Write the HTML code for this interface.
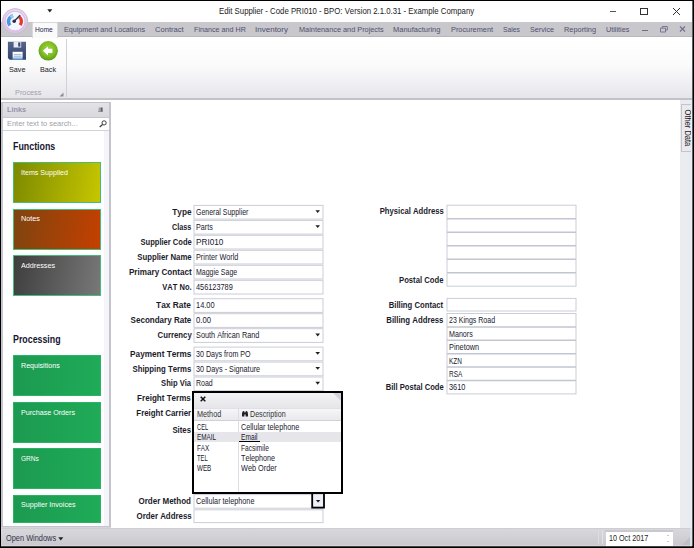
<!DOCTYPE html>
<html><head><meta charset="utf-8"><title>Edit Supplier</title>
<style>
*{box-sizing:border-box;margin:0;padding:0}
html,body{width:694px;height:548px;overflow:hidden;background:#000}
body{font-kerning:none;font-family:"Liberation Sans",sans-serif;font-size:8px;color:#222;position:relative}
.abs,.tx,.tile{position:absolute}
.tx{white-space:nowrap;height:12px;line-height:12px;transform-origin:0 50%}
.tx.r{transform-origin:100% 50%}
.title{font-size:8.6px;color:#1a1a1a;transform:scaleX(.907)}
.tab{font-size:8px;color:#50506e;transform:scaleX(.915)}
.lbl{font-size:8.4px;font-weight:bold;color:#1c1c2c;transform:scaleX(.975)}
.val{font-size:8.2px;color:#20202f;transform:scaleX(.872)}
.tile{left:13px;width:88px;height:41px;border:1px solid #3fbf7a}
.tl{font-size:8px;color:#fff;transform:scaleX(.9)}
.hd{font-size:10px;font-weight:bold;color:#15152e;transform:scaleX(.895)}
.arrow{position:absolute;width:0;height:0;border-left:2.4px solid transparent;border-right:2.4px solid transparent;border-top:2.8px solid #222}
</style></head><body>

<div class="abs" style="left:1px;top:1px;width:691px;height:545px;background:#fff"></div>
<div class="abs" style="left:1px;top:546px;width:691px;height:1px;background:#444446"></div>
<div class="abs" style="left:692px;top:1px;width:1px;height:545px;background:#5c6068"></div>
<div class="tx title" style="left:218.5px;top:5px;transform:scaleX(0.907);">Edit Supplier - Code PRI010 - BPO: Version 2.1.0.31 - Example Company</div>
<div class="abs" style="left:609.5px;top:11px;width:6px;height:1px;background:#555"></div>
<div class="abs" style="left:640px;top:8px;width:8px;height:7px;border:1px solid #333"></div>
<svg class="abs" style="left:672px;top:7px" width="9" height="9" viewBox="0 0 9 9"><path d="M1 1L8 8M8 1L1 8" stroke="#333" stroke-width="1" fill="none"/></svg>
<svg class="abs" style="left:47px;top:8.6px" width="6" height="4" viewBox="0 0 6 4"><path d="M0.3 0.2H5.3L2.8 3.6Z" fill="#222"/></svg>
<div class="abs" style="left:1px;top:22px;width:691px;height:15px;background:#c7c7cc;border-bottom:1px solid #b6b6be"></div>
<div class="abs" style="left:1px;top:37px;width:691px;height:63px;background:linear-gradient(#ffffff,#fbfbfc 45%,#ececf0 85%,#e6e6ea);border-bottom:2px solid #c2c2c7"></div>
<div class="abs" style="left:32px;top:22px;width:26px;height:16px;background:#fafafb;border:1px solid #d8d8de;border-bottom:none;border-radius:2px 2px 0 0"></div>
<div class="tx tab" style="left:34.8px;top:24px;transform:scaleX(0.834);color:#26264a">Home</div>
<div class="tx tab" style="left:63.6px;top:24px;transform:scaleX(0.897);">Equipment and Locations</div>
<div class="tx tab" style="left:155.3px;top:24px;transform:scaleX(0.949);">Contract</div>
<div class="tx tab" style="left:193.8px;top:24px;transform:scaleX(0.899);">Finance and HR</div>
<div class="tx tab" style="left:255.4px;top:24px;transform:scaleX(1.003);">Inventory</div>
<div class="tx tab" style="left:298.6px;top:24px;transform:scaleX(0.916);">Maintenance and Projects</div>
<div class="tx tab" style="left:393.1px;top:24px;transform:scaleX(0.935);">Manufacturing</div>
<div class="tx tab" style="left:450.5px;top:24px;transform:scaleX(0.917);">Procurement</div>
<div class="tx tab" style="left:502.8px;top:24px;transform:scaleX(0.849);">Sales</div>
<div class="tx tab" style="left:529.7px;top:24px;transform:scaleX(0.900);">Service</div>
<div class="tx tab" style="left:564.0px;top:24px;transform:scaleX(0.922);">Reporting</div>
<div class="tx tab" style="left:606.0px;top:24px;transform:scaleX(0.904);">Utilities</div>
<div class="abs" style="left:641.5px;top:29.5px;width:6px;height:1px;background:#70708a"></div>
<svg class="abs" style="left:659.6px;top:25.6px" width="8" height="7" viewBox="0 0 8 7"><path d="M2.3 2V0.5H7.3V4H5.6M0.5 2.2H5.5V6H0.5Z" stroke="#70708a" stroke-width="0.9" fill="none"/></svg>
<svg class="abs" style="left:679px;top:26px" width="7" height="6" viewBox="0 0 7 6"><path d="M1 0.5L6 5.5M6 0.5L1 5.5" stroke="#70708a" stroke-width="1.1" fill="none"/></svg>
<svg class="abs" style="left:1px;top:6.5px" width="29" height="29" viewBox="0 0 29 29">
<defs><radialGradient id="ag" cx="50%" cy="45%" r="55%"><stop offset="0" stop-color="#ffffff"/><stop offset=".6" stop-color="#edf4fb"/><stop offset=".78" stop-color="#ead0f0"/><stop offset="1" stop-color="#c9c0d2"/></radialGradient></defs>
<circle cx="14.1" cy="14.2" r="12.6" fill="url(#ag)" stroke="#c8c0d0" stroke-width="1"/>
<circle cx="14.1" cy="14.2" r="10.1" fill="none" stroke="#e0bae8" stroke-width="1.2"/>
<circle cx="14.1" cy="14.2" r="8.8" fill="#f2f8fd"/>
<path d="M7.6 19.4A7.7 7.7 0 0 1 11.4 7L12.6 10.2A4.3 4.3 0 0 0 10.4 17.2Z" fill="#4f97dc"/>
<path d="M8.6 9.6A7.6 7.6 0 0 1 11.4 7L12.6 10.2A4.3 4.3 0 0 0 11.2 11.4Z" fill="#9ccaf0"/>
<path d="M19 8.4A7.7 7.7 0 0 1 20.6 19L17.8 17.2A4.4 4.4 0 0 0 17.2 11Z" fill="#e23a28"/>
<path d="M13.4 14L18.8 8.6" stroke="#2a3248" stroke-width="1.4" fill="none" stroke-linecap="round"/>
<circle cx="13.2" cy="14.2" r="1.8" fill="#26304c"/>
</svg>
<div class="abs" style="left:65.5px;top:39px;width:1px;height:58px;background:#d0d0d6"></div>
<svg class="abs" style="left:7px;top:41px" width="20" height="20" viewBox="0 0 20 20">
<defs><linearGradient id="sg" x1="0" y1="0" x2="0" y2="1"><stop offset="0" stop-color="#56658c"/><stop offset="1" stop-color="#34446c"/></linearGradient>
<linearGradient id="sl" x1="0" y1="0" x2="0" y2="1"><stop offset="0" stop-color="#ffffff"/><stop offset=".6" stop-color="#e4eef8"/><stop offset="1" stop-color="#4a98de"/></linearGradient></defs>
<path d="M0.9 0.7H19V18.7H2.6L0.9 17Z" fill="url(#sg)"/>
<rect x="6.6" y="0.7" width="7.6" height="5.8" fill="#e8ecf4"/>
<rect x="11.2" y="1.4" width="2.2" height="4.2" fill="#3c4b72"/>
<rect x="5.6" y="10.8" width="10" height="7.9" fill="url(#sl)"/>
<rect x="7" y="13" width="7.2" height="0.9" fill="#a8b4c8"/>
<rect x="7" y="14.8" width="7.2" height="0.9" fill="#a8b4c8"/>
</svg>
<svg class="abs" style="left:38px;top:40px" width="21" height="22" viewBox="0 0 21 22">
<defs><radialGradient id="bg" cx="50%" cy="42%" r="58%"><stop offset="0" stop-color="#a6d444"/><stop offset=".65" stop-color="#7cbc22"/><stop offset="1" stop-color="#5a9812"/></radialGradient></defs>
<circle cx="10.2" cy="10.8" r="9.7" fill="url(#bg)"/>
<path d="M4.8 10.8L10 6.2V8.8H14.4V13.1H10V15.4Z" fill="#fff"/>
</svg>
<div class="tx tab" style="left:8.8px;top:64px;color:#222;font-size:8.1px;transform:scaleX(.89)">Save</div>
<div class="tx tab" style="left:40.2px;top:64px;color:#222;font-size:8.1px;transform:scaleX(.89)">Back</div>
<div class="tx tab" style="left:15.0px;top:87px;color:#a0a0aa">Process</div>
<svg class="abs" style="left:59px;top:92px" width="5" height="5" viewBox="0 0 5 5"><path d="M4.5 0.5V4.5H0.5Z" fill="#8a8a98"/></svg>
<div class="abs" style="left:1px;top:102px;width:110px;height:425px;background:#fff;border:1px solid #c2c3cc;border-left:2px solid #c4c5ce;border-right:2px solid #c3c4cd"></div>
<div class="abs" style="left:3px;top:103px;width:106px;height:15px;background:linear-gradient(#e3e3e7,#d8d8dd);border-bottom:1px solid #c6c6ce"></div>
<div class="tx tab" style="left:6.6px;top:104px;color:#9494a8;font-weight:bold;font-size:8px">Links</div>
<svg class="abs" style="left:98px;top:107px" width="6" height="6" viewBox="0 0 6 6"><rect x="0.5" y="0.5" width="2.2" height="4.2" fill="#a4a4aa"/><rect x="2.7" y="0.5" width="1.9" height="4.2" fill="#5c5c62"/><rect x="0.2" y="4.2" width="4.8" height="0.8" fill="#8a8a90"/></svg>
<div class="abs" style="left:3px;top:118px;width:106px;height:13px;background:#fff;border-bottom:1px solid #d2d4dc"></div>
<div class="tx tab" style="left:6.6px;top:118px;color:#a0a0ac;transform:scaleX(.93)">Enter text to search...</div>
<svg class="abs" style="left:98px;top:119px" width="10" height="10" viewBox="98 119 10 10"><circle cx="104.1" cy="122.9" r="2.1" stroke="#3c3c42" stroke-width="1" fill="none"/><path d="M102.6 124.5L99.7 127" stroke="#3c3c42" stroke-width="1.3"/></svg>
<div class="abs" style="left:103.5px;top:131px;width:5.5px;height:395px;background:#f5f5f9"></div>
<div class="tx hd" style="left:13.2px;top:140px;height:14px;line-height:14px;transform:scaleX(0.885);">Functions</div>
<div class="tile" style="top:162px;background:linear-gradient(100deg,#7d8a00,#c6c600)"></div>
<div class="tx tl" style="left:21.4px;top:167px;transform:scaleX(0.888);">Items Supplied</div>
<div class="tile" style="top:208.5px;background:linear-gradient(100deg,#7e4410,#c44000)"></div>
<div class="tx tl" style="left:21.4px;top:213px;transform:scaleX(0.909);">Notes</div>
<div class="tile" style="top:255px;background:linear-gradient(100deg,#3e3e3e,#787878)"></div>
<div class="tx tl" style="left:21.4px;top:260px;transform:scaleX(0.900);">Addresses</div>
<div class="tx hd" style="left:13.4px;top:333px;height:14px;line-height:14px;transform:scaleX(0.883);">Processing</div>
<div class="tile" style="top:355.4px;height:41px;background:linear-gradient(90deg,#1c9a50,#1fab58);border-color:#27b565"></div>
<div class="tx tl" style="left:21.4px;top:360px;transform:scaleX(0.888);">Requisitions</div>
<div class="tile" style="top:402px;height:41px;background:linear-gradient(90deg,#1c9a50,#1fab58);border-color:#27b565"></div>
<div class="tx tl" style="left:21.4px;top:407px;transform:scaleX(0.893);">Purchase Orders</div>
<div class="tile" style="top:448.3px;height:41px;background:linear-gradient(90deg,#1c9a50,#1fab58);border-color:#27b565"></div>
<div class="tx tl" style="left:21.4px;top:453px;transform:scaleX(0.822);">GRNs</div>
<div class="tile" style="top:494.8px;height:28px;background:linear-gradient(90deg,#1c9a50,#1fab58);border-color:#27b565"></div>
<div class="tx tl" style="left:21.4px;top:499px;transform:scaleX(0.895);">Supplier Invoices</div>
<div class="abs" style="left:679.5px;top:100px;width:12.5px;height:428px;background:#ebecf0"></div>
<div class="abs" style="left:680.5px;top:104px;width:11px;height:47.5px;border:1px solid #c4c4ce;background:#e9e9ee"></div>
<div class="abs" style="left:686.9px;top:127.0px;width:0;height:0"><div style="position:absolute;left:-19px;top:-6px;width:38px;height:12px;line-height:12px;font-size:8.2px;color:#1c1c24;text-align:center;white-space:nowrap;transform:rotate(90deg) scaleX(.915)">Other Data</div></div>
<svg class="abs" style="left:0;top:0" width="694" height="548" viewBox="0 0 694 548"><rect x="194.00" y="205.40" width="129.00" height="13.70" fill="#fff" stroke="#cbcdd8" stroke-width="1"/><rect x="194.00" y="220.40" width="129.00" height="13.70" fill="#fff" stroke="#cbcdd8" stroke-width="1"/><rect x="194.00" y="235.30" width="129.00" height="13.70" fill="#fff" stroke="#cbcdd8" stroke-width="1"/><rect x="194.00" y="250.30" width="129.00" height="13.70" fill="#fff" stroke="#cbcdd8" stroke-width="1"/><rect x="194.00" y="265.30" width="129.00" height="13.70" fill="#fff" stroke="#cbcdd8" stroke-width="1"/><rect x="194.00" y="280.30" width="129.00" height="13.70" fill="#fff" stroke="#cbcdd8" stroke-width="1"/><rect x="194.00" y="298.70" width="129.00" height="13.70" fill="#fff" stroke="#cbcdd8" stroke-width="1"/><rect x="194.00" y="313.70" width="129.00" height="13.70" fill="#fff" stroke="#cbcdd8" stroke-width="1"/><rect x="194.00" y="328.70" width="129.00" height="13.70" fill="#fff" stroke="#cbcdd8" stroke-width="1"/><rect x="194.00" y="347.10" width="129.00" height="13.70" fill="#fff" stroke="#cbcdd8" stroke-width="1"/><rect x="194.00" y="362.10" width="129.00" height="13.70" fill="#fff" stroke="#cbcdd8" stroke-width="1"/><rect x="194.00" y="377.00" width="129.00" height="13.70" fill="#fff" stroke="#cbcdd8" stroke-width="1"/><rect x="194.00" y="494.60" width="129.00" height="13.60" fill="#fff" stroke="#cbcdd8" stroke-width="1"/><rect x="194.00" y="509.80" width="129.00" height="12.80" fill="#fff" stroke="#cbcdd8" stroke-width="1"/><rect x="447.00" y="205.20" width="129.00" height="81.00" fill="#fff" stroke="#cbcdd8" stroke-width="1"/><path d="M447.00 218.70H576.00" stroke="#c2c5d2" stroke-width="1.5"/><path d="M447.00 232.20H576.00" stroke="#c2c5d2" stroke-width="1.5"/><path d="M447.00 245.70H576.00" stroke="#c2c5d2" stroke-width="1.5"/><path d="M447.00 259.20H576.00" stroke="#c2c5d2" stroke-width="1.5"/><path d="M447.00 272.70H576.00" stroke="#c2c5d2" stroke-width="1.5"/><rect x="447.00" y="298.40" width="129.00" height="12.60" fill="#fff" stroke="#cbcdd8" stroke-width="1"/><rect x="447.00" y="313.50" width="129.00" height="80.40" fill="#fff" stroke="#cbcdd8" stroke-width="1"/><path d="M447.00 326.90H576.00" stroke="#c2c5d2" stroke-width="1.5"/><path d="M447.00 340.30H576.00" stroke="#c2c5d2" stroke-width="1.5"/><path d="M447.00 353.70H576.00" stroke="#c2c5d2" stroke-width="1.5"/><path d="M447.00 367.10H576.00" stroke="#c2c5d2" stroke-width="1.5"/><path d="M447.00 380.50H576.00" stroke="#c2c5d2" stroke-width="1.5"/></svg>
<div class="tx lbl r" style="right:502.7px;top:206px;transform:scaleX(0.985);">Type</div>
<div class="tx val" style="left:196.4px;top:207px;transform:scaleX(0.853);">General Supplier</div>
<div class="tx lbl r" style="right:502.7px;top:221px;transform:scaleX(0.861);">Class</div>
<div class="tx val" style="left:196.4px;top:222px;transform:scaleX(0.878);">Parts</div>
<div class="tx lbl r" style="right:502.7px;top:236px;transform:scaleX(0.903);">Supplier Code</div>
<div class="tx val" style="left:196.4px;top:237px;transform:scaleX(1.002);">PRI010</div>
<div class="tx lbl r" style="right:502.7px;top:251px;transform:scaleX(0.927);">Supplier Name</div>
<div class="tx val" style="left:196.4px;top:252px;transform:scaleX(0.887);">Printer World</div>
<div class="tx lbl r" style="right:502.7px;top:266px;transform:scaleX(0.971);">Primary Contact</div>
<div class="tx val" style="left:196.4px;top:267px;transform:scaleX(0.853);">Maggie Sage</div>
<div class="tx lbl r" style="right:502.7px;top:281px;transform:scaleX(0.898);">VAT No.</div>
<div class="tx val" style="left:196.4px;top:282px;transform:scaleX(0.897);">456123789</div>
<div class="tx lbl r" style="right:502.7px;top:299px;transform:scaleX(0.997);">Tax Rate</div>
<div class="tx val" style="left:196.4px;top:300px;transform:scaleX(0.906);">14.00</div>
<div class="tx lbl r" style="right:502.7px;top:314px;transform:scaleX(0.959);">Secondary Rate</div>
<div class="tx val" style="left:196.4px;top:315px;transform:scaleX(0.940);">0.00</div>
<div class="tx lbl r" style="right:502.7px;top:329px;transform:scaleX(0.930);">Currency</div>
<div class="tx val" style="left:196.4px;top:330px;transform:scaleX(0.893);">South African Rand</div>
<div class="tx lbl r" style="right:502.7px;top:348px;transform:scaleX(0.983);">Payment Terms</div>
<div class="tx val" style="left:196.4px;top:349px;transform:scaleX(0.870);">30 Days from PO</div>
<div class="tx lbl r" style="right:502.7px;top:363px;transform:scaleX(0.929);">Shipping Terms</div>
<div class="tx val" style="left:196.4px;top:364px;transform:scaleX(0.886);">30 Days - Signature</div>
<div class="tx lbl r" style="right:502.7px;top:377px;transform:scaleX(0.906);">Ship Via</div>
<div class="tx val" style="left:196.4px;top:378px;transform:scaleX(0.857);">Road</div>
<div class="tx lbl r" style="right:502.7px;top:392px;transform:scaleX(0.962);">Freight Terms</div>
<div class="tx lbl r" style="right:502.7px;top:407px;transform:scaleX(0.943);">Freight Carrier</div>
<div class="tx lbl r" style="right:502.7px;top:424px;transform:scaleX(0.931);">Sites</div>
<div class="tx lbl r" style="right:502.7px;top:495px;transform:scaleX(0.955);">Order Method</div>
<div class="tx lbl r" style="right:502.7px;top:510px;transform:scaleX(0.940);">Order Address</div>
<div class="tx val" style="left:196.4px;top:496px;transform:scaleX(0.885);">Cellular telephone</div>
<div class="tx val" style="left:448.8px;top:315px;transform:scaleX(0.857);">23 Kings Road</div>
<div class="tx val" style="left:448.8px;top:329px;transform:scaleX(0.870);">Manors</div>
<div class="tx val" style="left:448.8px;top:342px;transform:scaleX(0.895);">Pinetown</div>
<div class="tx val" style="left:448.8px;top:356px;transform:scaleX(0.787);">KZN</div>
<div class="tx val" style="left:448.8px;top:369px;transform:scaleX(0.795);">RSA</div>
<div class="tx val" style="left:448.8px;top:382px;transform:scaleX(0.899);">3610</div>
<div class="tx lbl r" style="right:250.6px;top:205px;transform:scaleX(0.918);">Physical Address</div>
<div class="tx lbl r" style="right:250.6px;top:274px;transform:scaleX(0.917);">Postal Code</div>
<div class="tx lbl r" style="right:250.6px;top:299px;transform:scaleX(0.920);">Billing Contact</div>
<div class="tx lbl r" style="right:250.6px;top:314px;transform:scaleX(0.930);">Billing Address</div>
<div class="tx lbl r" style="right:250.6px;top:381px;transform:scaleX(0.910);">Bill Postal Code</div>
<svg class="abs" style="left:0;top:0" width="694" height="400" viewBox="0 0 694 400"><path d="M315.4 210.20h4.6l-2.3 2.9z" fill="#1e1e26"/><path d="M315.4 225.20h4.6l-2.3 2.9z" fill="#1e1e26"/><path d="M315.4 333.50h4.6l-2.3 2.9z" fill="#1e1e26"/><path d="M315.4 351.90h4.6l-2.3 2.9z" fill="#1e1e26"/><path d="M315.4 366.90h4.6l-2.3 2.9z" fill="#1e1e26"/><path d="M315.4 381.80h4.6l-2.3 2.9z" fill="#1e1e26"/></svg>
<svg class="abs" style="left:305px;top:488px" width="24" height="24" viewBox="305 488 24 24"><rect x="312.2" y="493.2" width="11.8" height="14.4" fill="#eef0f7" stroke="#000" stroke-width="1.8"/><path d="M315.9 500.0h4.4l-2.2 2.5z" fill="#15151c"/></svg>
<div class="abs" style="left:192px;top:391.3px;width:151px;height:102.6px;background:#fff;border:2px solid #000"></div>
<div class="abs" style="left:194px;top:393.3px;width:147px;height:14.4px;background:linear-gradient(#f3f3f5,#e6e6ea)"></div>
<div class="abs" style="left:194px;top:407.7px;width:147px;height:13.3px;background:linear-gradient(#f6f6f8,#e9e9ee);border-bottom:1px solid #d0d0d8;border-top:1px solid #e0e0e6"></div>
<svg class="abs" style="left:200px;top:396.4px" width="6" height="6" viewBox="0 0 6 6"><path d="M0.7 0.7L5.3 5.3M5.3 0.7L0.7 5.3" stroke="#111" stroke-width="1.5"/></svg>
<svg class="abs" style="left:333px;top:393.3px" width="8" height="8" viewBox="0 0 8 8"><path d="M0 0H8V8Z" fill="#d2d2da"/></svg>
<div class="abs" style="left:237.5px;top:407.7px;width:1px;height:84px;background:#dcdce4"></div>
<div class="abs" style="left:194px;top:432.3px;width:147px;height:9.8px;background:#e6e6ea"></div>
<div class="tx val" style="left:197.0px;top:409px;transform:scaleX(0.888);color:#333">Method</div>
<svg class="abs" style="left:241.5px;top:411.3px" width="6" height="6" viewBox="0 0 6 6"><path d="M0 3.2C0 1 .8 0 1.6 0S2.6 .8 2.6 1.6H3.4C3.4 .8 3.6 0 4.4 0S6 1 6 3.2V5.4H3.6V3.4H2.4V5.4H0Z" fill="#222"/></svg>
<div class="tx val" style="left:250.4px;top:409px;transform:scaleX(0.870);color:#333">Description</div>
<div class="tx val" style="left:197.0px;top:422px;transform:scaleX(0.702);">CEL</div>
<div class="tx val" style="left:240.9px;top:422px;transform:scaleX(0.882);">Cellular telephone</div>
<div class="tx val" style="left:197.0px;top:432px;transform:scaleX(0.772);">EMAIL</div>
<div class="tx val" style="left:240.9px;top:432px;transform:scaleX(0.810);">Email</div>
<div class="tx val" style="left:197.0px;top:443px;transform:scaleX(0.768);">FAX</div>
<div class="tx val" style="left:240.9px;top:443px;transform:scaleX(0.809);">Facsimile</div>
<div class="tx val" style="left:197.0px;top:453px;transform:scaleX(0.711);">TEL</div>
<div class="tx val" style="left:240.9px;top:453px;transform:scaleX(0.880);">Telephone</div>
<div class="tx val" style="left:197.0px;top:463px;transform:scaleX(0.766);">WEB</div>
<div class="tx val" style="left:240.9px;top:463px;transform:scaleX(0.894);">Web Order</div>
<div class="abs" style="left:239.2px;top:440.9px;width:21px;height:1.6px;background:#000"></div>
<div class="abs" style="left:1px;top:527px;width:110px;height:2px;background:#d6d6da"></div>
<div class="abs" style="left:1px;top:528px;width:691px;height:18px;background:linear-gradient(#d8d8dc,#d0d0d5 50%,#c9c9ce 90%,#d8d8dc);border-top:1px solid #cdcdd2"></div>
<div class="tx tab" style="left:6.2px;top:533px;transform:scaleX(0.903);color:#33334a;font-size:8.2px">Open Windows</div>
<svg class="abs" style="left:58px;top:536.6px" width="6" height="4" viewBox="0 0 6 4"><path d="M0.3 0.2H5.3L2.8 3.4Z" fill="#222"/></svg>
<div class="abs" style="left:601.5px;top:531px;width:1px;height:13px;background:#e2e2e8"></div>
<div class="abs" style="left:598px;top:531px;width:1px;height:13px;background:#dcdce2"></div>
<div class="abs" style="left:605px;top:530px;width:68.4px;height:2px;background:#c8c8ce"></div>
<div class="abs" style="left:606px;top:531.5px;width:66.6px;height:14.3px;background:#fff"></div>
<div class="tx val" style="left:609.3px;top:533px;transform:scaleX(0.880);color:#222;font-size:8.2px">10 Oct 2017</div>
<div class="abs" style="left:666.6px;top:535px;width:0;height:0;border-left:1.5px solid transparent;border-right:1.5px solid transparent;border-bottom:1.6px solid #999"></div>
<div class="abs" style="left:666.6px;top:541.4px;width:0;height:0;border-left:1.5px solid transparent;border-right:1.5px solid transparent;border-top:1.6px solid #999"></div>
<svg class="abs" style="left:682px;top:536px" width="9" height="9" viewBox="0 0 9 9"><path d="M9 0V9H0Z" fill="#c0c0c8"/></svg>
<div class="abs" style="left:690px;top:528px;width:2px;height:18px;background:#dde3ee"></div>
<div class="abs" style="left:691px;top:100px;width:1px;height:428px;background:#e6eef8"></div>
</body></html>
